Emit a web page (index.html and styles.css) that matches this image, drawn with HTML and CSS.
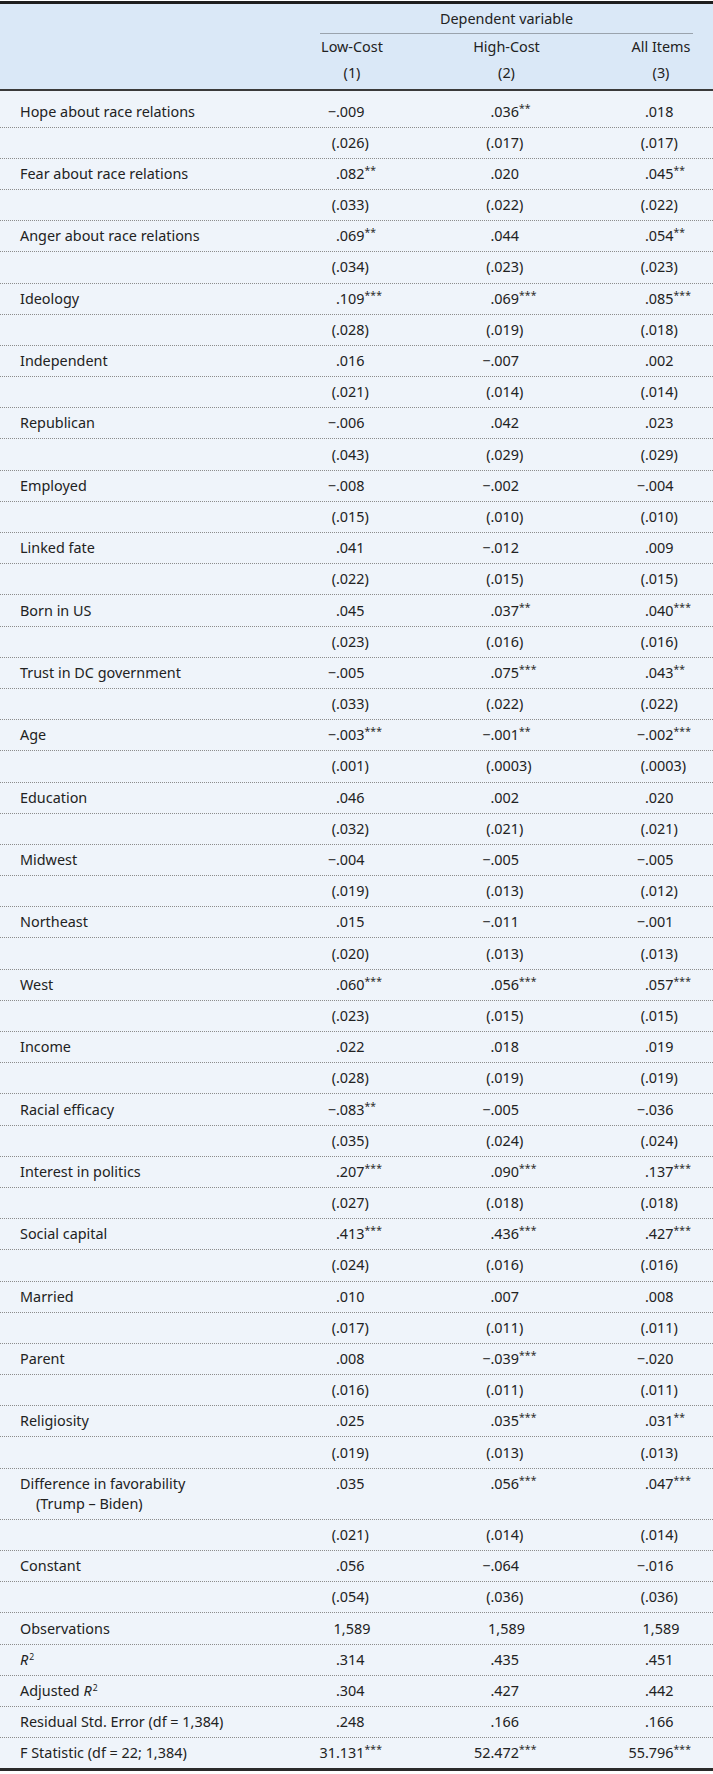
FILE: index.html
```html
<!DOCTYPE html>
<html lang="en">
<head>
<meta charset="utf-8">
<title>Regression table</title>
<link rel="stylesheet" href="styles.css">
</head>
<body>
<div class="tbl">
  <div class="head">
    <div class="r h1"><div class="l"></div><div class="dv">Dependent variable</div></div>
    <div class="r h2"><div class="l"></div><div class="hc">Low-Cost</div><div class="hc">High-Cost</div><div class="hc">All Items</div></div>
    <div class="r h3"><div class="l"></div><div class="hc">(1)</div><div class="hc">(2)</div><div class="hc">(3)</div></div>
  </div>
  <div class="body">
    <div class="r first"><div class="l">Hope about race relations</div><div class="n"><span class="w">−</span>.009</div><div class="n"><span class="w"></span>.036<sup>**</sup></div><div class="n"><span class="w"></span>.018</div></div>
    <div class="r"><div class="l"></div><div class="n"><span class="w">(</span>.026)</div><div class="n"><span class="w">(</span>.017)</div><div class="n"><span class="w">(</span>.017)</div></div>

    <div class="r"><div class="l">Fear about race relations</div><div class="n"><span class="w"></span>.082<sup>**</sup></div><div class="n"><span class="w"></span>.020</div><div class="n"><span class="w"></span>.045<sup>**</sup></div></div>
    <div class="r"><div class="l"></div><div class="n"><span class="w">(</span>.033)</div><div class="n"><span class="w">(</span>.022)</div><div class="n"><span class="w">(</span>.022)</div></div>

    <div class="r"><div class="l">Anger about race relations</div><div class="n"><span class="w"></span>.069<sup>**</sup></div><div class="n"><span class="w"></span>.044</div><div class="n"><span class="w"></span>.054<sup>**</sup></div></div>
    <div class="r"><div class="l"></div><div class="n"><span class="w">(</span>.034)</div><div class="n"><span class="w">(</span>.023)</div><div class="n"><span class="w">(</span>.023)</div></div>

    <div class="r"><div class="l">Ideology</div><div class="n"><span class="w"></span>.109<sup>***</sup></div><div class="n"><span class="w"></span>.069<sup>***</sup></div><div class="n"><span class="w"></span>.085<sup>***</sup></div></div>
    <div class="r"><div class="l"></div><div class="n"><span class="w">(</span>.028)</div><div class="n"><span class="w">(</span>.019)</div><div class="n"><span class="w">(</span>.018)</div></div>

    <div class="r"><div class="l">Independent</div><div class="n"><span class="w"></span>.016</div><div class="n"><span class="w">−</span>.007</div><div class="n"><span class="w"></span>.002</div></div>
    <div class="r"><div class="l"></div><div class="n"><span class="w">(</span>.021)</div><div class="n"><span class="w">(</span>.014)</div><div class="n"><span class="w">(</span>.014)</div></div>

    <div class="r"><div class="l">Republican</div><div class="n"><span class="w">−</span>.006</div><div class="n"><span class="w"></span>.042</div><div class="n"><span class="w"></span>.023</div></div>
    <div class="r"><div class="l"></div><div class="n"><span class="w">(</span>.043)</div><div class="n"><span class="w">(</span>.029)</div><div class="n"><span class="w">(</span>.029)</div></div>

    <div class="r"><div class="l">Employed</div><div class="n"><span class="w">−</span>.008</div><div class="n"><span class="w">−</span>.002</div><div class="n"><span class="w">−</span>.004</div></div>
    <div class="r"><div class="l"></div><div class="n"><span class="w">(</span>.015)</div><div class="n"><span class="w">(</span>.010)</div><div class="n"><span class="w">(</span>.010)</div></div>

    <div class="r"><div class="l">Linked fate</div><div class="n"><span class="w"></span>.041</div><div class="n"><span class="w">−</span>.012</div><div class="n"><span class="w"></span>.009</div></div>
    <div class="r"><div class="l"></div><div class="n"><span class="w">(</span>.022)</div><div class="n"><span class="w">(</span>.015)</div><div class="n"><span class="w">(</span>.015)</div></div>

    <div class="r"><div class="l">Born in US</div><div class="n"><span class="w"></span>.045</div><div class="n"><span class="w"></span>.037<sup>**</sup></div><div class="n"><span class="w"></span>.040<sup>***</sup></div></div>
    <div class="r"><div class="l"></div><div class="n"><span class="w">(</span>.023)</div><div class="n"><span class="w">(</span>.016)</div><div class="n"><span class="w">(</span>.016)</div></div>

    <div class="r"><div class="l">Trust in DC government</div><div class="n"><span class="w">−</span>.005</div><div class="n"><span class="w"></span>.075<sup>***</sup></div><div class="n"><span class="w"></span>.043<sup>**</sup></div></div>
    <div class="r"><div class="l"></div><div class="n"><span class="w">(</span>.033)</div><div class="n"><span class="w">(</span>.022)</div><div class="n"><span class="w">(</span>.022)</div></div>

    <div class="r"><div class="l">Age</div><div class="n"><span class="w">−</span>.003<sup>***</sup></div><div class="n"><span class="w">−</span>.001<sup>**</sup></div><div class="n"><span class="w">−</span>.002<sup>***</sup></div></div>
    <div class="r"><div class="l"></div><div class="n"><span class="w">(</span>.001)</div><div class="n"><span class="w">(</span>.0003)</div><div class="n"><span class="w">(</span>.0003)</div></div>

    <div class="r"><div class="l">Education</div><div class="n"><span class="w"></span>.046</div><div class="n"><span class="w"></span>.002</div><div class="n"><span class="w"></span>.020</div></div>
    <div class="r"><div class="l"></div><div class="n"><span class="w">(</span>.032)</div><div class="n"><span class="w">(</span>.021)</div><div class="n"><span class="w">(</span>.021)</div></div>

    <div class="r"><div class="l">Midwest</div><div class="n"><span class="w">−</span>.004</div><div class="n"><span class="w">−</span>.005</div><div class="n"><span class="w">−</span>.005</div></div>
    <div class="r"><div class="l"></div><div class="n"><span class="w">(</span>.019)</div><div class="n"><span class="w">(</span>.013)</div><div class="n"><span class="w">(</span>.012)</div></div>

    <div class="r"><div class="l">Northeast</div><div class="n"><span class="w"></span>.015</div><div class="n"><span class="w">−</span>.011</div><div class="n"><span class="w">−</span>.001</div></div>
    <div class="r"><div class="l"></div><div class="n"><span class="w">(</span>.020)</div><div class="n"><span class="w">(</span>.013)</div><div class="n"><span class="w">(</span>.013)</div></div>

    <div class="r"><div class="l">West</div><div class="n"><span class="w"></span>.060<sup>***</sup></div><div class="n"><span class="w"></span>.056<sup>***</sup></div><div class="n"><span class="w"></span>.057<sup>***</sup></div></div>
    <div class="r"><div class="l"></div><div class="n"><span class="w">(</span>.023)</div><div class="n"><span class="w">(</span>.015)</div><div class="n"><span class="w">(</span>.015)</div></div>

    <div class="r"><div class="l">Income</div><div class="n"><span class="w"></span>.022</div><div class="n"><span class="w"></span>.018</div><div class="n"><span class="w"></span>.019</div></div>
    <div class="r"><div class="l"></div><div class="n"><span class="w">(</span>.028)</div><div class="n"><span class="w">(</span>.019)</div><div class="n"><span class="w">(</span>.019)</div></div>

    <div class="r"><div class="l">Racial efficacy</div><div class="n"><span class="w">−</span>.083<sup>**</sup></div><div class="n"><span class="w">−</span>.005</div><div class="n"><span class="w">−</span>.036</div></div>
    <div class="r"><div class="l"></div><div class="n"><span class="w">(</span>.035)</div><div class="n"><span class="w">(</span>.024)</div><div class="n"><span class="w">(</span>.024)</div></div>

    <div class="r"><div class="l">Interest in politics</div><div class="n"><span class="w"></span>.207<sup>***</sup></div><div class="n"><span class="w"></span>.090<sup>***</sup></div><div class="n"><span class="w"></span>.137<sup>***</sup></div></div>
    <div class="r"><div class="l"></div><div class="n"><span class="w">(</span>.027)</div><div class="n"><span class="w">(</span>.018)</div><div class="n"><span class="w">(</span>.018)</div></div>

    <div class="r"><div class="l">Social capital</div><div class="n"><span class="w"></span>.413<sup>***</sup></div><div class="n"><span class="w"></span>.436<sup>***</sup></div><div class="n"><span class="w"></span>.427<sup>***</sup></div></div>
    <div class="r"><div class="l"></div><div class="n"><span class="w">(</span>.024)</div><div class="n"><span class="w">(</span>.016)</div><div class="n"><span class="w">(</span>.016)</div></div>

    <div class="r"><div class="l">Married</div><div class="n"><span class="w"></span>.010</div><div class="n"><span class="w"></span>.007</div><div class="n"><span class="w"></span>.008</div></div>
    <div class="r"><div class="l"></div><div class="n"><span class="w">(</span>.017)</div><div class="n"><span class="w">(</span>.011)</div><div class="n"><span class="w">(</span>.011)</div></div>

    <div class="r"><div class="l">Parent</div><div class="n"><span class="w"></span>.008</div><div class="n"><span class="w">−</span>.039<sup>***</sup></div><div class="n"><span class="w">−</span>.020</div></div>
    <div class="r"><div class="l"></div><div class="n"><span class="w">(</span>.016)</div><div class="n"><span class="w">(</span>.011)</div><div class="n"><span class="w">(</span>.011)</div></div>

    <div class="r"><div class="l">Religiosity</div><div class="n"><span class="w"></span>.025</div><div class="n"><span class="w"></span>.035<sup>***</sup></div><div class="n"><span class="w"></span>.031<sup>**</sup></div></div>
    <div class="r"><div class="l"></div><div class="n"><span class="w">(</span>.019)</div><div class="n"><span class="w">(</span>.013)</div><div class="n"><span class="w">(</span>.013)</div></div>

    <div class="r"><div class="l"><span class="ln">Difference in favorability</span><span class="ln ind">(Trump – Biden)</span></div><div class="n"><span class="w"></span>.035</div><div class="n"><span class="w"></span>.056<sup>***</sup></div><div class="n"><span class="w"></span>.047<sup>***</sup></div></div>
    <div class="r"><div class="l"></div><div class="n"><span class="w">(</span>.021)</div><div class="n"><span class="w">(</span>.014)</div><div class="n"><span class="w">(</span>.014)</div></div>

    <div class="r"><div class="l">Constant</div><div class="n"><span class="w"></span>.056</div><div class="n"><span class="w">−</span>.064</div><div class="n"><span class="w">−</span>.016</div></div>
    <div class="r"><div class="l"></div><div class="n"><span class="w">(</span>.054)</div><div class="n"><span class="w">(</span>.036)</div><div class="n"><span class="w">(</span>.036)</div></div>

    <div class="r"><div class="l">Observations</div><div class="n c">1,589</div><div class="n c">1,589</div><div class="n c">1,589</div></div>
    <div class="r"><div class="l"><i>R</i><sup class="sq">2</sup></div><div class="n"><span class="w"></span>.314</div><div class="n"><span class="w"></span>.435</div><div class="n"><span class="w"></span>.451</div></div>
    <div class="r"><div class="l">Adjusted <i>R</i><sup class="sq">2</sup></div><div class="n"><span class="w"></span>.304</div><div class="n"><span class="w"></span>.427</div><div class="n"><span class="w"></span>.442</div></div>
    <div class="r"><div class="l">Residual Std. Error (df = 1,384)</div><div class="n"><span class="w"></span>.248</div><div class="n"><span class="w"></span>.166</div><div class="n"><span class="w"></span>.166</div></div>
    <div class="r last"><div class="l">F Statistic (df = 22; 1,384)</div><div class="n"><span class="w">31</span>.131<sup>***</sup></div><div class="n"><span class="w">52</span>.472<sup>***</sup></div><div class="n"><span class="w">55</span>.796<sup>***</sup></div></div>
  </div>
</div>
</body>
</html>
```

FILE: styles.css
```css
html, body {
  margin: 0;
  padding: 0;
  background: #ffffff;
}

body {
  padding-top: 1px;
  font-family: "Noto Sans", "Open Sans", sans-serif;
  font-size: 14.4px;
  color: #222222;
}

.tbl {
  width: 713px;
  border-top: 3px solid #1e1e1e;
  border-bottom: 3px solid #2a2a2a;
}

.head {
  background: #dae8f7;
  border-bottom: 2px solid #3a3a3a;
}

.r {
  display: grid;
  grid-template-columns: 247.5px 100px 100px 100px;
  column-gap: 54.5px;
  align-items: start;
}

.head .r {
  line-height: 26px;
}

.h1 {
  line-height: 29px;
}

.h1 .dv {
  grid-column: 2 / 5;
  margin: 0 18px;
  text-align: center;
  line-height: 29px;
  border-bottom: 1px solid #9aa3ad;
}

.h3 {
  padding-bottom: 3px;
}

.hc {
  text-align: center;
}

.body {
  background: #eff4fa;
}

.body .r {
  padding: 5.1px 0;
  line-height: 20px;
  border-bottom: 1px dotted #8c8c8c;
}

.body .r.first {
  padding-top: 10.5px;
}

.body .r.last {
  border-bottom: none;
}

.l {
  padding-left: 20px;
  white-space: nowrap;
}

.ln {
  display: block;
}

.ind {
  padding-left: 16px;
}

.n {
  white-space: nowrap;
}

.n.c {
  text-align: center;
}

.w {
  display: inline-block;
  width: 34px;
  text-align: right;
}

sup {
  font-size: 0.72em;
  line-height: 0;
  vertical-align: 0.5em;
  letter-spacing: 0.01em;
}

sup.sq {
  font-size: 0.6em;
  vertical-align: 0.6em;
  margin-left: 1px;
}
```
